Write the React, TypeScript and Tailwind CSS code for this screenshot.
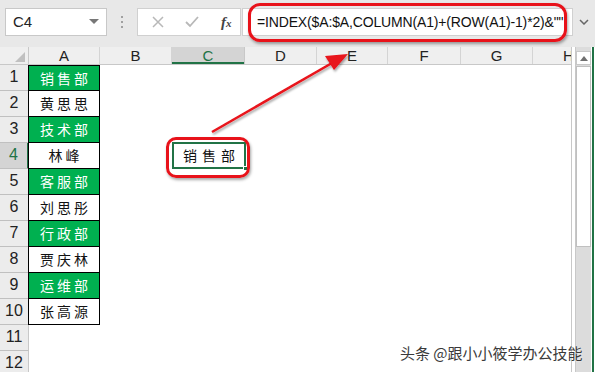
import React from "react";

const cols = [
  { name: "A", w: 71 },
  { name: "B", w: 72 },
  { name: "C", w: 73 },
  { name: "D", w: 72 },
  { name: "E", w: 71 },
  { name: "F", w: 73 },
  { name: "G", w: 72 },
  { name: "H", w: 72 },
];

const aData: { t: string; g: boolean }[] = [
  { t: "销售部", g: true },
  { t: "黄思思", g: false },
  { t: "技术部", g: true },
  { t: "林峰", g: false },
  { t: "客服部", g: true },
  { t: "刘思彤", g: false },
  { t: "行政部", g: true },
  { t: "贾庆林", g: false },
  { t: "运维部", g: true },
  { t: "张高源", g: false },
];

const cjk = { fontFamily: '"Noto Sans CJK SC", sans-serif' };
const latin = { fontFamily: '"Liberation Sans", Arial, sans-serif' };

export default function App() {
  const rows = Array.from({ length: 12 }, (_, i) => i + 1);
  return (
    <div className="relative w-[595px] h-[372px] overflow-hidden bg-white" style={latin}>
      {/* Toolbar */}
      <div className="h-[47px] bg-[#e8e8e8] flex items-start pt-[8px]">
        <div className="ml-[5px] w-[102px] h-[28px] bg-white border border-[#c8c8c8] flex items-center justify-between pl-[7px] pr-[7px]">
          <span className="text-[15px] text-[#222]">C4</span>
          <svg width="10" height="6" viewBox="0 0 10 6">
            <path d="M0 0 L10 0 L5 5 Z" fill="#777" />
          </svg>
        </div>
        <div className="w-[30px] h-[28px] flex flex-col items-center justify-center gap-[3px]">
          <div className="w-[2px] h-[2px] bg-[#a0a0a0]" />
          <div className="w-[2px] h-[2px] bg-[#a0a0a0]" />
          <div className="w-[2px] h-[2px] bg-[#a0a0a0]" />
        </div>
        <div className="w-[104px] h-[28px] bg-white border border-[#d0d0d0] flex items-center">
          <svg className="ml-[14px]" width="12" height="12" viewBox="0 0 12 12">
            <path d="M1 1 L11 11 M11 1 L1 11" stroke="#b8b8b8" strokeWidth="1.5" />
          </svg>
          <svg className="ml-[21px]" width="14" height="12" viewBox="0 0 14 12">
            <path d="M1 6 L5 10 L13 1" stroke="#b8b8b8" strokeWidth="1.8" fill="none" />
          </svg>
          <span
            className="ml-[22px] text-[15px] italic text-[#444] font-bold"
            style={{ fontFamily: '"Liberation Serif", serif' }}
          >
            f<span className="text-[11px]">x</span>
          </span>
        </div>
        <div className="ml-[1px] w-[331px] h-[28px] bg-white border border-[#d0d0d0] flex items-center pl-[14px] overflow-hidden">
          <span className="text-[14px] text-[#111] whitespace-nowrap tracking-[-0.15px]">
            =INDEX($A:$A,COLUMN(A1)+(ROW(A1)-1)*2)&amp;""
          </span>
        </div>
        <div className="flex-1 h-[28px] flex items-center justify-center">
          <svg width="10" height="6" viewBox="0 0 10 6">
            <path d="M1 1 L5 5 L9 1" stroke="#666" strokeWidth="1.5" fill="none" />
          </svg>
        </div>
      </div>

      {/* Sheet area */}
      <div className="flex">
        <div className="w-[572px] shrink-0 border-r border-[#c8c8c8] overflow-hidden">
          {/* Column header */}
          <div className="flex h-[18px] bg-[#efefef] border-b border-[#c8c8c8]">
            <div className="w-[29px] shrink-0 border-r border-[#c8c8c8] relative">
              <svg className="absolute right-[3px] bottom-[2px]" width="10" height="10" viewBox="0 0 10 10">
                <path d="M10 0 L10 10 L0 10 Z" fill="#c0c0c0" />
              </svg>
            </div>
            {cols.map((c) => (
              <div
                key={c.name}
                style={{ width: c.w }}
                className={
                  c.name === "C"
                    ? "shrink-0 flex items-center justify-center text-[15px] leading-none text-[#217346] bg-[#d4d4d4] border-r border-[#c8c8c8] shadow-[inset_0_-2px_0_#217346]"
                    : "shrink-0 flex items-center justify-center text-[15px] leading-none text-[#222] border-r border-[#d4d4d4]"
                }
              >
                {c.name}
              </div>
            ))}
          </div>
          {/* Rows */}
          {rows.map((r) => (
            <div key={r} className="flex h-[26px]">
              <div
                className={
                  r === 4
                    ? "w-[29px] shrink-0 bg-[#d4d4d4] border-r-2 border-[#217346] border-b border-b-[#c0c0c0] flex items-end justify-center pb-[1px] text-[16px] text-[#217346]"
                    : "w-[29px] shrink-0 bg-[#ececec] border-r border-[#c8c8c8] border-b border-b-[#c0c0c0] flex items-end justify-center pb-[1px] text-[16px] text-[#222]"
                }
              >
                {r}
              </div>
              {r <= 10 ? (
                <div
                  className={
                    (aData[r - 1].g ? "bg-[#00b050] text-white " : "bg-white text-[#111] ") +
                    "w-[72px] shrink-0 -ml-[1px] border border-black flex items-center justify-center text-[14px] tracking-[3px] pl-[3px]" +
                    (r > 1 ? " -mt-[1px] h-[27px]" : " h-[26px]")
                  }
                  style={cjk}
                >
                  {aData[r - 1].t}
                </div>
              ) : (
                <div className="w-[71px] shrink-0" />
              )}
              <div className="w-[72px] shrink-0" />
              {r === 4 ? (
                <div
                  className="w-[74px] shrink-0 -mt-[1px] h-[27px] border-2 border-[#217346] bg-white flex items-center justify-center text-[14px] tracking-[5px] pl-[5px] text-[#111] relative"
                  style={cjk}
                >
                  销售部
                  <div className="absolute right-[-4px] bottom-[-4px] w-[5px] h-[5px] bg-[#217346] border border-white" />
                </div>
              ) : (
                <div className="w-[73px] shrink-0" />
              )}
            </div>
          ))}
        </div>
        {/* Scrollbar */}
        <div className="ml-[3px] w-[16px] h-[325px] bg-[#dcdcdc] border-l border-[#c8c8c8] flex flex-col">
          <div className="h-[14px] mt-[4px] bg-white border border-[#c8c8c8] flex items-center justify-center">
            <svg width="8" height="5" viewBox="0 0 8 5">
              <path d="M0 5 L4 0 L8 5 Z" fill="#707070" />
            </svg>
          </div>
          <div className="h-[181px] bg-white border border-[#c0c0c0] mt-[1px]" />
        </div>
        <div className="w-[2px] ml-[1px] bg-[#217346] h-[325px]" />
      </div>

      {/* Annotations */}
      <div className="absolute left-[248px] top-[3px] w-[319px] h-[39px] rounded-[12px] border-[3px] border-[#e8121a] shadow-[1px_2px_3px_rgba(0,0,0,0.35)]" />
      <div className="absolute left-[166px] top-[137px] w-[84px] h-[41px] rounded-[10px] border-[3px] border-[#e8121a] shadow-[1px_2px_3px_rgba(0,0,0,0.35)]" />
      <svg className="absolute left-0 top-0" width="595" height="372" viewBox="0 0 595 372">
        <defs>
          <filter id="sh" x="-20%" y="-20%" width="140%" height="140%">
            <feDropShadow dx="1" dy="2" stdDeviation="1.2" floodColor="#000" floodOpacity="0.35" />
          </filter>
        </defs>
        <g filter="url(#sh)">
          <line x1="212" y1="132" x2="332" y2="63" stroke="#e8121a" strokeWidth="2.5" />
          <path d="M348 54 L325 56 L334 70 Z" fill="#e8121a" />
        </g>
      </svg>

      {/* Watermark */}
      <div
        className="absolute left-[400px] top-[342px] text-[15px] text-[#3a3a3a] whitespace-nowrap"
        style={{ ...cjk, textShadow: "0 0 2px #fff" }}
      >
        头条 @跟小小筱学办公技能
      </div>
    </div>
  );
}
